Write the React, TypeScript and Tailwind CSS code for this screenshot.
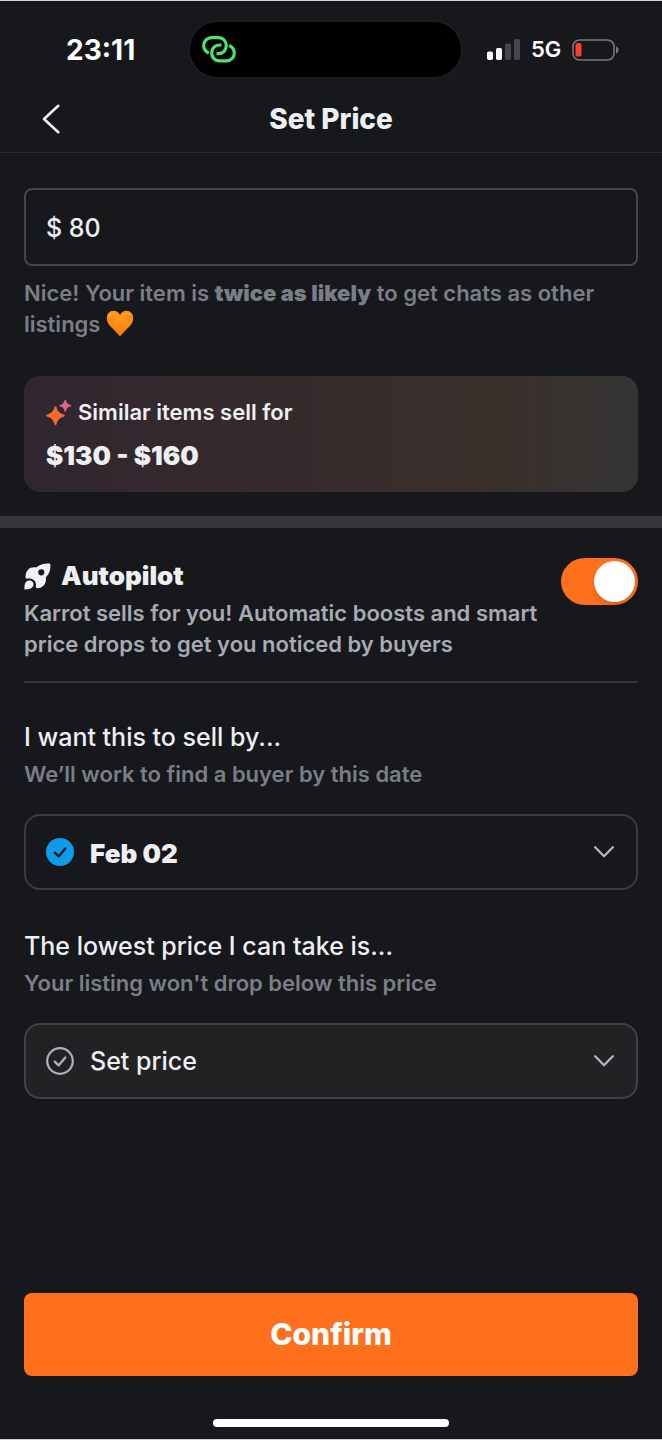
import React, { useState } from 'react';

const CheckIcon: React.FC<{ filled?: boolean }> = ({ filled }) => (
  <svg viewBox="0 0 28 28" className="w-7 h-7" fill="none" aria-hidden="true">
    {filled ? (
      <circle cx="14" cy="14" r="14" fill="#0e9bea" />
    ) : (
      <circle cx="14" cy="14" r="12.8" stroke="#adb1ba" strokeWidth="2.2" />
    )}
    <path
      d="M8.8 14.6l3.8 3.8 6.7-8"
      stroke={filled ? '#17181c' : '#adb1ba'}
      strokeWidth="2.3"
      strokeLinecap="round"
      strokeLinejoin="round"
    />
  </svg>
);

const ChevronIcon: React.FC = () => (
  <svg viewBox="0 0 20 12" className="w-5 h-3" fill="none" aria-hidden="true">
    <path d="M1.2 1.3l8.8 9 8.8-9" stroke="#b4b6bd" strokeWidth="2.3" strokeLinecap="round" strokeLinejoin="round" />
  </svg>
);

const SparkleIcon: React.FC = () => (
  <svg viewBox="0 0 26 27" className="w-[26px] h-[27px] shrink-0" aria-hidden="true">
    <defs>
      <linearGradient id="spark" x1="0" y1="1" x2="1" y2="0">
        <stop offset="0" stopColor="#ff6f1c" />
        <stop offset="1" stopColor="#f0663c" />
      </linearGradient>
    </defs>
    <path d="M9.5 7.2c.5 0 .8.4 1 .9 1.3 4.2 2.3 5.8 7.7 7.6 1.1.4 1.1 1.4 0 1.8-5.4 1.8-6.4 3.4-7.7 7.9-.3 1-1.6 1-1.9 0-1.3-4.5-2.3-6.1-7.7-7.9-1.1-.4-1.1-1.4 0-1.8 5.4-1.8 6.4-3.4 7.7-7.6.1-.5.4-.9.9-.9z" fill="url(#spark)" />
    <path d="M19.3.4c.3 0 .5.3.6.6.8 2.8 1.5 4 4.8 5.1.8.3.8.9 0 1.2-3.3 1.1-4 2.3-4.8 5.2-.2.7-1 .7-1.2 0-.8-2.9-1.5-4.1-4.8-5.2-.8-.3-.8-.9 0-1.2 3.3-1.1 4-2.3 4.8-5.1.1-.3.3-.6.6-.6z" fill="#e0628d" />
  </svg>
);

const RocketIcon: React.FC = () => (
  <svg viewBox="0 0 27 27" className="w-[27px] h-[27px] shrink-0" aria-hidden="true">
    <path
      fillRule="evenodd"
      d="M24.8.4c1 0 1.6.6 1.6 1.6.1 5-.8 8.4-4.5 12.2.4 3-.2 6.2-2.2 8.3-1.6 1.7-3.4 2.6-6 2.7-1.4 0-2-.7-1.8-1.9.4-2.5-.4-4.8-2-6.2-1.600-1.400-3.600-1.900-6.200-1.600-1.500.2-2.300-.4-2.200-1.600.2-2.900.9-5.400 2.500-7.100 2-2.200 4.800-2.700 8.100-2.300C15.600 1.300 19.400.3 24.800.4zM17.300 6.200a3.100 3.100 0 100 6.200 3.100 3.100 0 000-6.200z"
      fill="#f0f1f4"
    />
    <path d="M2.200 18.700c1.800-1.700 4.800-1.600 6.300 0 1.500 1.600 1.400 4.300-.4 5.900-1.700 1.500-4 1.900-6.700 1.900-.7 0-1-.3-1-1 0-2.700.2-5.200 1.800-6.800z" fill="#f0f1f4" />
  </svg>
);

const HeartIcon: React.FC = () => (
  <svg viewBox="0 0 28 27" className="inline-block w-7 h-[27px] align-text-bottom" role="img" aria-label="orange heart">
    <defs>
      <radialGradient id="heart" cx="0.5" cy="0.25" r="0.75">
        <stop offset="0" stopColor="#ff9a1f" />
        <stop offset="0.6" stopColor="#ff8a12" />
        <stop offset="1" stopColor="#f07a0c" />
      </radialGradient>
    </defs>
    <path d="M14 26.2c-1.2-.8-3-3.5-6.2-6.5C3.8 15.9.8 13 .8 8 .8 3.9 3.6.8 7.3.8c3.1 0 5.5 1.5 6.7 4.2C15.2 2.3 17.6.8 20.7.8c3.7 0 6.5 3.1 6.5 7.2 0 5-3 7.9-7 11.7-3.2 3-5 5.7-6.2 6.5z" fill="url(#heart)" />
    <path d="M3.6 6.5c.4-2 1.8-3.2 3.7-3.2M18.2 4.3c1.800-1.300 4.300-1 5.600.8" stroke="#ffc04a" strokeWidth="1.6" strokeLinecap="round" fill="none" opacity="0.7" />
  </svg>
);

const StatusBar: React.FC = () => (
  <div className="grid grid-cols-[190px_271px_1fr] items-center pt-[21px] font-bold text-white">
    <span className="pl-[66px] text-[28px]">23:11</span>
    <div className="flex h-[55px] items-center rounded-full bg-black px-3 ring-2 ring-[#1c1d21]">
      <svg viewBox="0 0 34 27" className="w-[34px] h-[27px]" fill="none" stroke="#4be36f" strokeWidth="3.2" aria-hidden="true">
        <path d="M6.8 17.2C3.5 15.5 1.7 12.8 1.7 9.6 1.7 5 5.2 1.7 9.6 1.7h6.9c4.7 0 7.8 3.5 7.8 7.9 0 4.7-3.3 8-7.7 8h-2.1" />
        <path d="M27.2 9.4c3.3 1.7 5.1 4.4 5.1 7.6 0 4.6-3.5 7.9-7.9 7.9h-6.9c-4.7 0-7.8-3.5-7.8-7.9 0-4.7 3.3-8 7.7-8h2.1" />
      </svg>
    </div>
    <div className="flex items-center gap-[11px] pl-[26px]">
      <svg viewBox="0 0 33 21" className="w-[33px] h-[21px]" aria-hidden="true">
        <rect x="0" y="12.5" width="6" height="8.5" rx="1.8" fill="#fff" />
        <rect x="9" y="9" width="6" height="12" rx="1.8" fill="#fff" />
        <rect x="18" y="4.5" width="6" height="16.5" rx="1.8" fill="#46474a" />
        <rect x="27" y="0" width="6" height="21" rx="1.8" fill="#46474a" />
      </svg>
      <span className="text-[22px] font-semibold">5G</span>
      <svg viewBox="0 0 47 22" className="w-[47px] h-[22px]" fill="none" aria-hidden="true">
        <rect x="1" y="1" width="41" height="20" rx="6.5" stroke="#77787b" strokeWidth="1.6" />
        <rect x="3.5" y="4" width="6" height="13.5" rx="2.6" fill="#ff3d30" />
        <path d="M44 7.5c1.6.5 2.6 1.9 2.6 3.5S45.6 14 44 14.5z" fill="#77787b" />
      </svg>
    </div>
  </div>
);

type PickerProps = {
  id: string;
  title: string;
  hint: string;
  options: string[];
  selected?: boolean;
};

const Picker: React.FC<PickerProps> = ({ id, title, hint, options, selected }) => (
  <div>
    <label htmlFor={id} className="block text-[25px] leading-8 font-medium">{title}</label>
    <p className="mt-1.5 text-[22px] leading-[31px] font-semibold text-[#7b7e87]">{hint}</p>
    <div className="relative mt-6">
      <select
        id={id}
        className={
          selected
            ? 'block h-[76px] w-full appearance-none rounded-2xl border-2 border-[#393b3f] bg-[#17181c] pt-0.5 pl-16 pr-16 text-[26px] font-black'
            : 'block h-[76px] w-full appearance-none rounded-2xl border-2 border-[#414245] bg-[#222224] pt-0.5 pl-16 pr-16 text-[25px] font-medium'
        }
      >
        {options.map((option) => (
          <option key={option}>{option}</option>
        ))}
      </select>
      <div className="pointer-events-none absolute inset-0 flex items-center justify-between pr-6 pl-[22px]">
        <CheckIcon filled={selected} />
        <ChevronIcon />
      </div>
    </div>
  </div>
);

const App: React.FC = () => {
  const [price, setPrice] = useState<string>('$ 80');
  const [autopilot, setAutopilot] = useState<boolean>(true);

  return (
    <div className="flex min-h-screen flex-col border-t border-b border-t-[#cfd8d2] border-b-[#cdced2] bg-[#17181c] font-['Inter',sans-serif] text-[#eeeff2]">
      <StatusBar />

      {/* Header */}
      <header className="grid h-[76px] grid-cols-[1fr_auto_1fr] items-center border-b border-[#2b2c30] px-6 pt-2">
        <button type="button" aria-label="Back" className="w-12 pl-[18px]">
          <svg viewBox="0 0 18 30" className="w-[18px] h-[30px]" fill="none" aria-hidden="true">
            <path d="M16.3 1.8L2 15l14.3 13.2" stroke="#eeeff2" strokeWidth="2.6" strokeLinecap="round" strokeLinejoin="round" />
          </svg>
        </button>
        <h1 className="text-[28px] font-extrabold">Set Price</h1>
      </header>

      {/* Price */}
      <section className="px-6 pt-[35px] pb-6">
        <input
          type="text"
          aria-label="Price"
          value={price}
          onChange={(e) => setPrice(e.target.value)}
          className="block h-[78px] w-full rounded-lg border-2 border-[#45474c] bg-transparent px-5 pt-0.5 text-[25px] font-medium outline-none"
        />
        <p className="mt-3 text-[22px] leading-[31px] font-semibold text-[#7b7e87]">
          Nice! Your item is <strong className="font-black">twice as likely</strong> to get chats as other listings{' '}
          <HeartIcon />
        </p>
        <div className="mt-9 rounded-2xl bg-linear-to-r from-[#30262e] via-[#392f2b] via-75% to-[#343433] px-[22px] py-[21px]">
          <p className="flex items-center gap-1.5 text-[22px] leading-[31px] font-semibold">
            <SparkleIcon />
            Similar items sell for
          </p>
          <p className="mt-3 text-[26px] leading-[31px] font-black">$130 - $160</p>
        </div>
      </section>

      <div className="h-3 bg-[#34373d]" />

      {/* Autopilot */}
      <section className="px-6 pt-[30px]">
        <div className="flex items-start justify-between gap-4 border-b-2 border-[#333438] pb-[21px]">
          <div className="pt-0.5">
            <h2 className="flex items-center gap-2.5 text-[26px] leading-8 font-black">
              <RocketIcon />
              Autopilot
            </h2>
            <p className="mt-1.5 text-[22px] leading-[31px] font-semibold text-[#a8aab4]">
              Karrot sells for you! Automatic boosts and smart price drops to get you noticed by buyers
            </p>
          </div>
          <label className="flex h-[47px] w-[77px] shrink-0 cursor-pointer items-center rounded-full bg-[#4d5159] p-[3px] has-checked:justify-end has-checked:bg-[#ff6f1c]">
            <input
              type="checkbox"
              role="switch"
              aria-label="Autopilot"
              checked={autopilot}
              onChange={(e) => setAutopilot(e.target.checked)}
              className="sr-only"
            />
            <span className="h-[41px] w-[41px] rounded-full bg-white shadow-md" />
          </label>
        </div>

        <div className="flex flex-col gap-10 pt-[38px]">
          <Picker
            id="sell-by"
            title="I want this to sell by..."
            hint="We’ll work to find a buyer by this date"
            options={['Feb 02']}
            selected
          />
          <Picker
            id="lowest-price"
            title="The lowest price I can take is..."
            hint="Your listing won't drop below this price"
            options={['Set price']}
          />
        </div>
      </section>

      {/* Bottom action */}
      <footer className="mt-auto flex flex-col items-center px-6 pt-10 pb-3">
        <button type="button" className="h-[83px] w-full rounded-lg bg-[#ff6f1c] text-[30px] font-extrabold text-white">
          Confirm
        </button>
        <div className="mt-[43px] h-2 w-[236px] rounded-full bg-white" />
      </footer>
    </div>
  );
};

export default App;
